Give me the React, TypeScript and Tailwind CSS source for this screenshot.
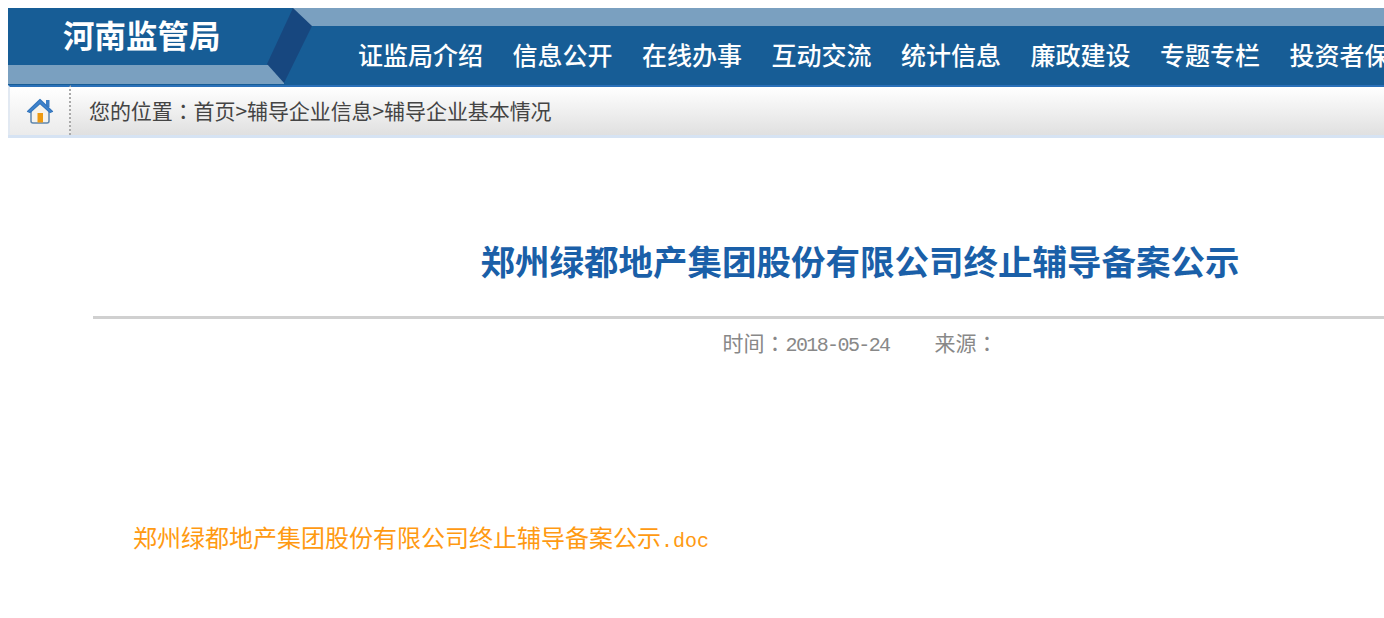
const cjk = { fontFamily: '"Noto Sans CJK SC", "Liberation Sans", sans-serif' };

const navItems = ["证监局介绍", "信息公开", "在线办事", "互动交流", "统计信息", "廉政建设", "专题专栏", "投资者保护"];

const HomeIcon = () => (
  <svg width="30" height="28" viewBox="0 0 30 28">
    <rect x="21" y="3" width="3.5" height="7" fill="#3f7fc4" />
    <path d="M6 13 L15 5 L24 13 V24 Q24 26 22 26 H8 Q6 26 6 24 Z" fill="#f6f3ec" stroke="#5f86ad" strokeWidth="1.5" />
    <path d="M2.5 14.5 L15 2.5 L27.5 14.5 L25 15.5 L15 6.5 L5 15.5 Z" fill="#3f85cf" stroke="#3576bd" strokeWidth="1.2" strokeLinejoin="round" />
    <rect x="12.5" y="16" width="5.5" height="9.5" fill="#ee9a10" />
  </svg>
);

const Colon = () => <span className="font-['Noto_Sans_CJK_TC']">：</span>;

export default function App() {
  return (
    <div className="h-[618px] w-[1384px] overflow-hidden bg-white pt-2 pl-2" style={cjk}>
      {/* header */}
      <div className="relative h-[77px] w-[1376px] overflow-hidden bg-[#175d96]">
        <div className="absolute top-0 right-0 left-[285px] h-[18px] bg-[#7aa0c0]" />
        <div className="absolute bottom-[1px] left-0 h-[19px] w-[276px] bg-[#7aa0c0]" />
        <svg className="absolute top-0 left-[255px]" width="54" height="77" viewBox="0 0 54 77">
          <path d="M30 0 L49 18 L21 75 L4 56 Z" fill="#17477f" />
        </svg>
        <div className="relative flex h-[58px] items-start">
          <div className="w-[267px] shrink-0 pt-[3px] pl-[55px] text-[31.5px] leading-[46px] font-bold text-white">河南监管局</div>
          <nav className="ml-[83px] flex shrink-0 gap-[29.5px] pt-[27px]">
            {navItems.map((item) => (
              <span key={item} className="whitespace-nowrap text-[25px] leading-[38px] font-medium text-white">
                {item}
              </span>
            ))}
          </nav>
        </div>
      </div>

      {/* breadcrumb */}
      <div className="flex h-[53px] w-[1376px] border-b-[3px] border-[#d6e3f3]">
        <div className="flex w-[63px] items-center justify-center border-t-2 border-r-2 border-l-2 border-t-[#2a70b8] border-r-[#aaaaaa] border-l-[#e2e9f2] bg-gradient-to-b from-white to-[#ebebeb] [border-right-style:dotted]">
          <HomeIcon />
        </div>
        <div className="flex flex-1 items-center border-t-2 border-[#2a70b8] bg-gradient-to-b from-white to-[#e0e0e0] pl-[18px] text-[21px] tracking-[-0.08px] text-[#444444]">
          您的位置<Colon />首页&gt;辅导企业信息&gt;辅导企业基本情况
        </div>
      </div>

      {/* article */}
      <div className="ml-[85px] w-[1534px]">
        <h1 className="mt-[100px] text-center text-[34.5px] leading-[44px] font-bold text-[#1a5fa8]">
          郑州绿都地产集团股份有限公司终止辅导备案公示
        </h1>
        <div className="mt-[34px] h-[3px] bg-[#d0d0d0]" />
        <div className="mt-[8px] flex justify-center gap-[45px] text-[21px] leading-[30px] text-[#888888]">
          <span>
            时间<Colon />
            <span className="font-['Liberation_Mono'] text-[20px] tracking-[-1.6px]">2018-05-24</span>
          </span>
          <span>
            来源<Colon />
          </span>
        </div>
        <a className="mt-[158px] ml-[40px] block text-[24px] leading-[36px] text-[#ff9a12]">
          郑州绿都地产集团股份有限公司终止辅导备案公示
          <span className="font-['Liberation_Mono'] text-[20px]">.doc</span>
        </a>
      </div>
    </div>
  );
}
